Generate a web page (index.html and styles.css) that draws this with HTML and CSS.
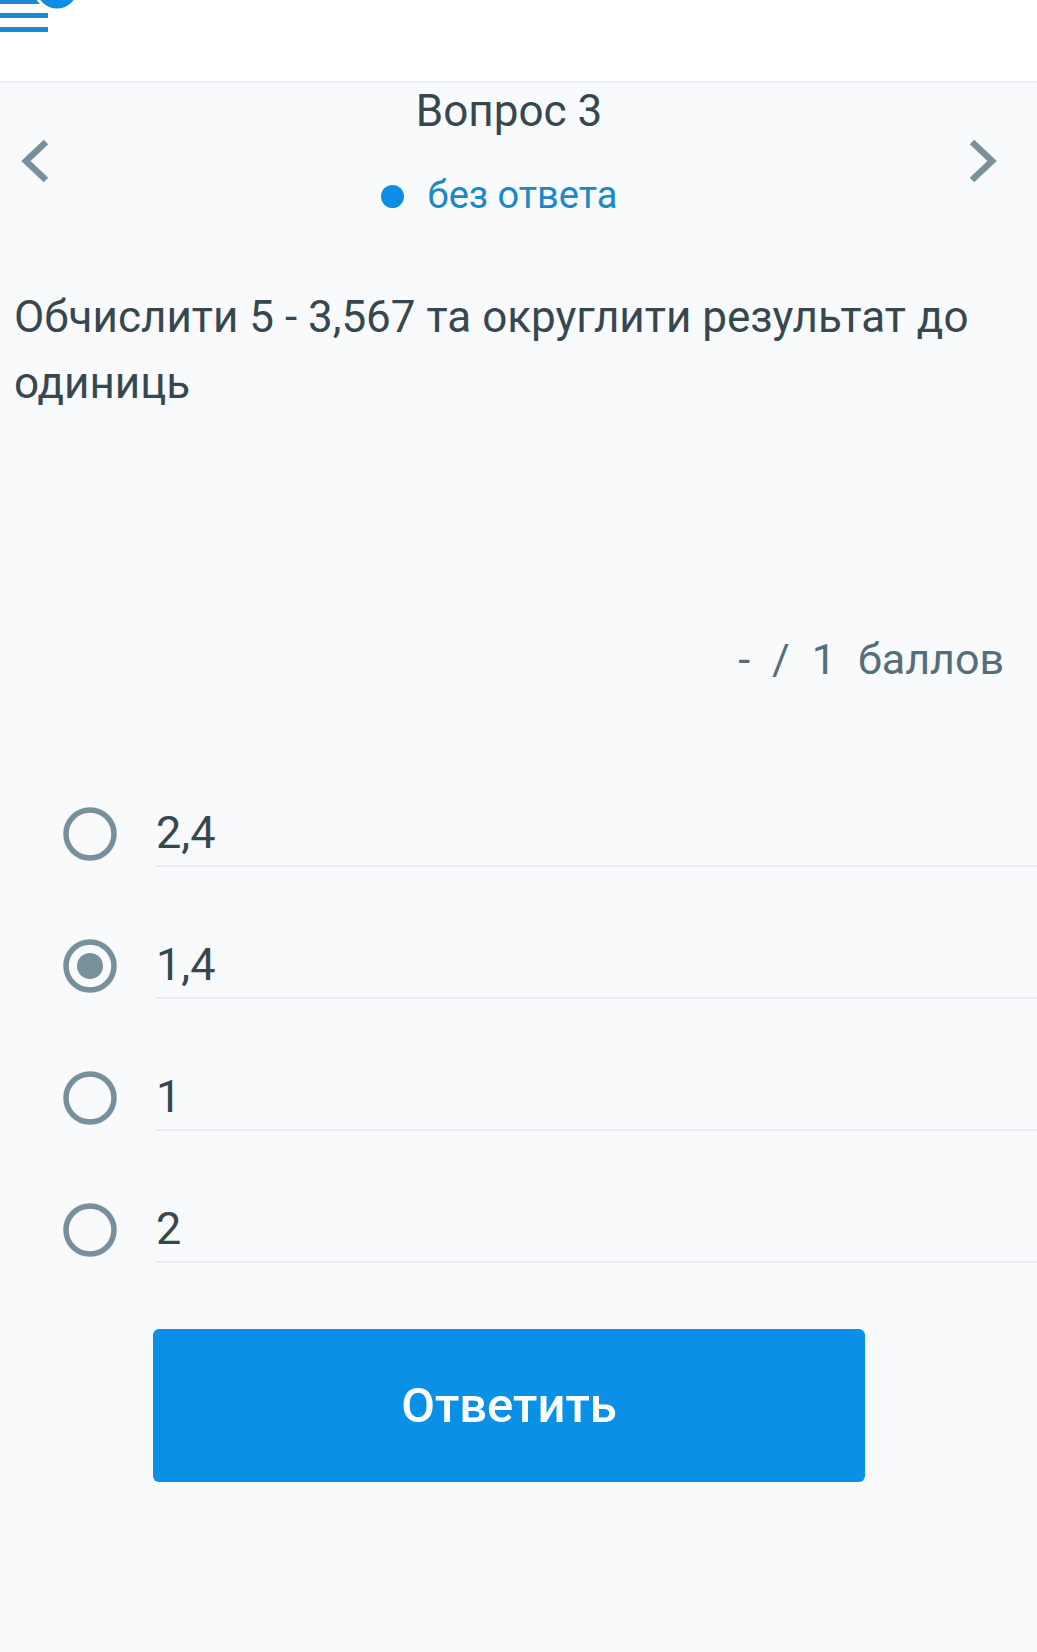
FILE: index.html
```html
<!DOCTYPE html>
<html>

<head>
  <title>Вопрос 3</title>
  <link rel="stylesheet" href="styles.css">
</head>

<body>

  <div class="topbar">
    <svg class="menu-icon" width="90" height="40" viewBox="0 0 90 40">
      <rect x="0" y="-1" width="48" height="5" fill="#1b87d6" />
      <rect x="0" y="13" width="48" height="5" fill="#1b87d6" />
      <rect x="0" y="27" width="48" height="5" fill="#1b87d6" />
      <circle cx="57" cy="-12" r="22" fill="#0d8ee6" stroke="#fff" stroke-width="3" />
    </svg>
  </div>

  <div class="question-nav">
    <a class="nav-arrow" href="#">
      <svg width="32" height="44" viewBox="0 0 32 44">
        <polyline points="27,3 7,22 27,41" fill="none" stroke="#78909c" stroke-width="6.5" />
      </svg>
    </a>
    <div class="nav-center">
      <div class="nav-title">Вопрос 3</div>
      <div class="nav-status">
        <span class="status-dot"></span>
        <span>без ответа</span>
      </div>
    </div>
    <a class="nav-arrow" href="#">
      <svg width="32" height="44" viewBox="0 0 32 44">
        <polyline points="5,3 25,22 5,41" fill="none" stroke="#78909c" stroke-width="6.5" />
      </svg>
    </a>
  </div>

  <div class="question-text">Обчислити 5 - 3,567 та округлити результат до одиниць</div>

  <div class="score">
    <span>-</span>
    <span>/</span>
    <span>1</span>
    <span>баллов</span>
  </div>

  <div class="options">
    <label class="option">
      <svg class="radio" width="54" height="54" viewBox="0 0 54 54">
        <circle cx="27" cy="27" r="24" fill="none" stroke="#78909c" stroke-width="5.5" />
      </svg>
      <span class="option-label">2,4</span>
    </label>
    <label class="option">
      <svg class="radio" width="54" height="54" viewBox="0 0 54 54">
        <circle cx="27" cy="27" r="24" fill="none" stroke="#78909c" stroke-width="5.5" />
        <circle cx="27" cy="27" r="13" fill="#78909c" />
      </svg>
      <span class="option-label">1,4</span>
    </label>
    <label class="option">
      <svg class="radio" width="54" height="54" viewBox="0 0 54 54">
        <circle cx="27" cy="27" r="24" fill="none" stroke="#78909c" stroke-width="5.5" />
      </svg>
      <span class="option-label">1</span>
    </label>
    <label class="option">
      <svg class="radio" width="54" height="54" viewBox="0 0 54 54">
        <circle cx="27" cy="27" r="24" fill="none" stroke="#78909c" stroke-width="5.5" />
      </svg>
      <span class="option-label">2</span>
    </label>
  </div>

  <button class="answer-button">Ответить</button>

</body>

</html>
```

FILE: styles.css
```css
body {
  font-family: Roboto, "Noto Sans", sans-serif;
  margin: 0;
  padding: 0;
  background-color: #f8fafc;
  color: #37474f;
}

/* top bar */
.topbar {
  height: 81px;
  background-color: #fff;
  border-bottom: 2px solid #eceff1;
  overflow: hidden;
}

.menu-icon {
  display: block;
  overflow: visible;
}

/* question navigation */
.question-nav {
  display: flex;
  justify-content: space-between;
  align-items: flex-start;
  padding: 2px 38px 0 19px;
}

.nav-arrow {
  display: block;
  margin-top: 54px;
}

.nav-arrow svg {
  display: block;
}

.nav-center {
  text-align: center;
}

.nav-title {
  font-size: 44px;
  line-height: 52px;
  color: #37474f;
}

.nav-status {
  display: flex;
  align-items: center;
  justify-content: center;
  margin-top: 35px;
  margin-right: 20px;
  font-size: 38px;
  line-height: 46px;
  color: #1b88c7;
}

.status-dot {
  width: 23px;
  height: 23px;
  border-radius: 50%;
  background-color: #0d8ee6;
  margin-right: 24px;
  margin-top: 2px;
}

/* question */
.question-text {
  margin-top: 66px;
  padding: 0 14px;
  font-size: 44px;
  line-height: 66px;
  color: #37474f;
}

.score {
  display: flex;
  justify-content: flex-end;
  gap: 22px;
  margin-top: 217px;
  padding-right: 33px;
  font-size: 43px;
  line-height: 52px;
  color: #546e7a;
}

/* options */
.options {
  margin-top: 116px;
}

.option {
  display: flex;
  align-items: center;
  padding-left: 63px;
  margin-bottom: 66px;
}

.option:last-child {
  margin-bottom: 0;
}

.radio {
  display: block;
  flex-shrink: 0;
}

.option-label {
  flex: 1;
  display: flex;
  align-items: center;
  height: 66px;
  box-sizing: border-box;
  margin-left: 39px;
  border-bottom: 2px solid #e8ecef;
  font-size: 45px;
  line-height: 52px;
  color: #37474f;
}

/* answer button */
.answer-button {
  display: block;
  margin: 66px 0 0 153px;
  width: 712px;
  height: 153px;
  border: none;
  border-radius: 6px;
  background-color: #0a91e6;
  color: #fff;
  font-family: Roboto, "Noto Sans", sans-serif;
  font-size: 49px;
  font-weight: 500;
  cursor: pointer;
}
```
